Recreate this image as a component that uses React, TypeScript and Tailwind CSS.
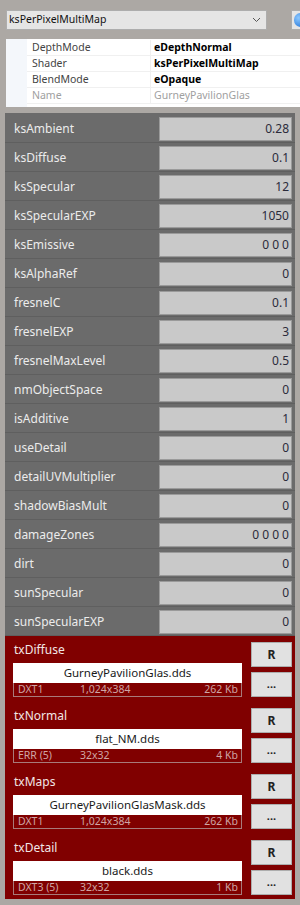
import React from "react";

const rows: [string, string][] = [
  ["ksAmbient", "0.28"],
  ["ksDiffuse", "0.1"],
  ["ksSpecular", "12"],
  ["ksSpecularEXP", "1050"],
  ["ksEmissive", "0 0 0"],
  ["ksAlphaRef", "0"],
  ["fresnelC", "0.1"],
  ["fresnelEXP", "3"],
  ["fresnelMaxLevel", "0.5"],
  ["nmObjectSpace", "0"],
  ["isAdditive", "1"],
  ["useDetail", "0"],
  ["detailUVMultiplier", "0"],
  ["shadowBiasMult", "0"],
  ["damageZones", "0 0 0 0"],
  ["dirt", "0"],
  ["sunSpecular", "0"],
  ["sunSpecularEXP", "0"],
];

const textures = [
  { name: "txDiffuse", file: "GurneyPavilionGlas.dds", fmt: "DXT1", size: "1,024x384", kb: "262 Kb" },
  { name: "txNormal", file: "flat_NM.dds", fmt: "ERR (5)", size: "32x32", kb: "4 Kb" },
  { name: "txMaps", file: "GurneyPavilionGlasMask.dds", fmt: "DXT1", size: "1,024x384", kb: "262 Kb" },
  { name: "txDetail", file: "black.dds", fmt: "DXT3 (5)", size: "32x32", kb: "1 Kb" },
];

const props: [string, string, boolean][] = [
  ["DepthMode", "eDepthNormal", true],
  ["Shader", "ksPerPixelMultiMap", true],
  ["BlendMode", "eOpaque", true],
  ["Name", "GurneyPavilionGlas", false],
];

export default function App() {
  return (
    <div
      className="w-[300px] h-[905px] bg-[#aca8a4] overflow-hidden flex flex-col"
      style={{ fontFamily: '"Noto Sans", "Open Sans", sans-serif' }}
    >
      {/* top bar */}
      <div className="flex items-center pt-[10px] pl-[6px] gap-[24px] h-[30px]">
        <div className="w-[261px] h-[20px] shrink-0 bg-[#e5e5e5] border border-[#adadad] flex items-center pl-[2px] pr-[4px] text-[10.5px] text-[#111]">
          <span className="flex-1">ksPerPixelMultiMap</span>
          <svg width="9" height="6" viewBox="0 0 9 6" className="mr-[1px]">
            <path d="M1 1 L4.5 4.5 L8 1" fill="none" stroke="#555" strokeWidth="1" />
          </svg>
        </div>
        <div className="w-[20px] h-[20px] shrink-0 bg-[#e5e5e5] border border-[#adadad] flex items-center pl-[2px]">
          <div className="w-[13px] h-[14px] shrink-0 rounded-full bg-[radial-gradient(circle_at_35%_35%,#8cc8ff,#1a6fd6)]" />
        </div>
      </div>

      {/* property grid */}
      <div className="ml-[6px] mt-[9px] h-[68px] bg-white flex text-[10.5px]">
        <div className="w-[21px] bg-[#f4f7fb]" />
        <div className="flex-1 pt-[1px]">
          {props.map(([k, v, en]) => (
            <div key={k} className="flex h-[16px] border-b border-[#f0f0f0] items-center">
              <div className={`w-[124px] pl-[5px] border-r border-[#f0f0f0] h-full flex items-center ${en ? "text-[#444]" : "text-[#a0a0a0]"}`}>{k}</div>
              <div className={`pl-[3px] ${en ? "font-bold text-black" : "text-[#a0a0a0]"}`}>{v}</div>
            </div>
          ))}
        </div>
      </div>

      {/* dark param panel */}
      <div className="ml-[5px] mt-[6px] w-[290px] bg-[#6b6b6b] pt-[1px]">
        {rows.map(([k, v]) => (
          <div key={k} className="h-[29px] flex items-start pt-[3px] border-b border-[#5f5f5f]">
            <div className="flex-1 pl-[9px] h-[24px] flex items-center text-[12px] text-[#ececec]">{k}</div>
            <div className="w-[133px] mr-[3px] h-[24px] bg-[#c9c9c9] border border-[#9a9a9a] flex items-center justify-end pr-[2px] text-[12px] text-[#2b2b3b]">
              {v}
            </div>
          </div>
        ))}
      </div>

      {/* textures */}
      <div className="ml-[5px] w-[290px] bg-[#800000] pt-[6px] pb-[4px] pl-[8px] pr-[3px] flex flex-col gap-[11px]">
        {textures.map((t) => (
          <div key={t.name} className="flex h-[55px] gap-[9px]">
            <div className="w-[229px] flex flex-col">
              <div className="h-[21px] pl-[1px] text-[12px] text-[#f2e6e6] leading-[15px]">{t.name}</div>
              <div className="h-[20px] bg-white flex items-center justify-center text-[11.5px] text-[#1a1a1a]">{t.file}</div>
              <div className="h-[14px] border border-t-0 border-[#a87a7a] flex items-center pl-[4px] pr-[3px] text-[10.5px] text-[#cfa5a5]">
                <span className="w-[62px]">{t.fmt}</span>
                <span className="flex-1">{t.size}</span>
                <span>{t.kb}</span>
              </div>
            </div>
            <div className="w-[41px] flex flex-col gap-[5px]">
              <div className="h-[25px] bg-[#e1e1e1] border border-[#adadad] flex items-center justify-center text-[12px] font-bold text-[#222]">R</div>
              <div className="h-[25px] bg-[#e1e1e1] border border-[#adadad] flex items-center justify-center text-[11px] font-bold text-[#222] leading-none pb-[3px]">...</div>
            </div>
          </div>
        ))}
      </div>
    </div>
  );
}
